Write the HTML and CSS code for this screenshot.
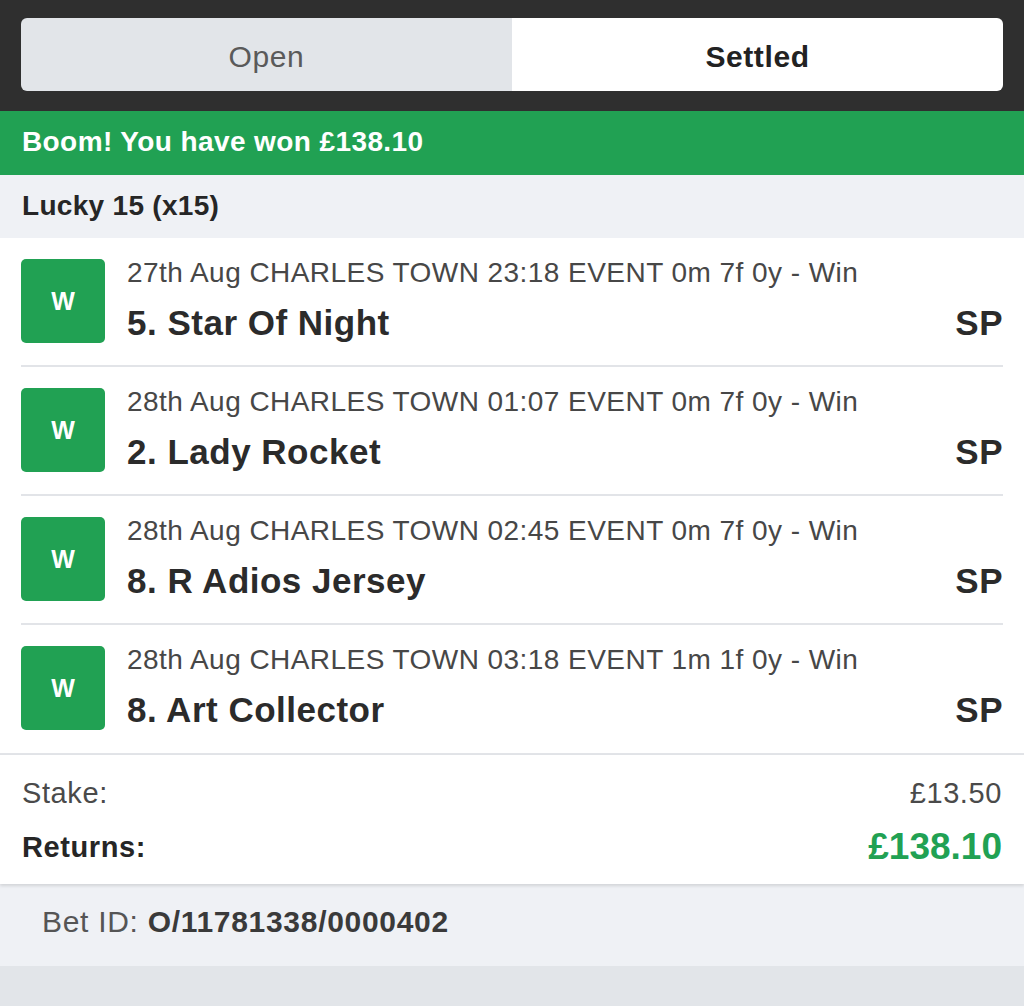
FILE: index.html
```html
<!DOCTYPE html>
<html lang="en">

<head>
    <meta charset="UTF-8">
    <meta name="viewport" content="width=device-width, initial-scale=1.0">
    <title>Settled Bets</title>
    <link rel="stylesheet" href="styles.css">
</head>

<body>

    <!-- Open / Settled switch -->
    <div class="top-bar">
        <div class="tabs">
            <div class="tab">Open</div>
            <div class="tab active">Settled</div>
        </div>
    </div>

    <div class="win-banner">Boom! You have won £138.10</div>

    <div class="bet-type">Lucky 15 (x15)</div>

    <!-- Selections -->
    <div class="selections">
        <div class="selection">
            <div class="badge">W</div>
            <div class="info">
                <div class="event">27th Aug CHARLES TOWN 23:18 EVENT 0m 7f 0y - Win</div>
                <div class="runner-line">
                    <span class="runner">5. Star Of Night</span>
                    <span class="price">SP</span>
                </div>
            </div>
        </div>
        <div class="selection">
            <div class="badge">W</div>
            <div class="info">
                <div class="event">28th Aug CHARLES TOWN 01:07 EVENT 0m 7f 0y - Win</div>
                <div class="runner-line">
                    <span class="runner">2. Lady Rocket</span>
                    <span class="price">SP</span>
                </div>
            </div>
        </div>
        <div class="selection">
            <div class="badge">W</div>
            <div class="info">
                <div class="event">28th Aug CHARLES TOWN 02:45 EVENT 0m 7f 0y - Win</div>
                <div class="runner-line">
                    <span class="runner">8. R Adios Jersey</span>
                    <span class="price">SP</span>
                </div>
            </div>
        </div>
        <div class="selection">
            <div class="badge">W</div>
            <div class="info">
                <div class="event">28th Aug CHARLES TOWN 03:18 EVENT 1m 1f 0y - Win</div>
                <div class="runner-line">
                    <span class="runner">8. Art Collector</span>
                    <span class="price">SP</span>
                </div>
            </div>
        </div>
    </div>

    <!-- Totals -->
    <div class="totals">
        <div class="total-row">
            <span>Stake:</span>
            <span>£13.50</span>
        </div>
        <div class="total-row returns">
            <span>Returns:</span>
            <span class="amount">£138.10</span>
        </div>
    </div>

    <div class="bet-id">Bet ID: <strong>O/11781338/0000402</strong></div>

    <div class="footer-space"></div>

</body>

</html>
```

FILE: styles.css
```css
body {
    font-family: 'Liberation Sans', Arial, Helvetica, sans-serif;
    background-color: #e2e5e9; /* Grey page background */
    margin: 0;
    padding: 0;
    color: #2b2b2b;
}

.top-bar {
    background-color: #2f2f2f; /* Dark header */
    padding: 18px 21px 20px;
}

.tabs {
    display: flex;
    height: 73px;
    border-radius: 6px;
    overflow: hidden;
}

.tab {
    flex: 1;
    display: flex;
    align-items: center;
    justify-content: center;
    padding-top: 5px;
    background-color: #e2e5e9;
    color: #5a5a5a;
    font-size: 30px;
    letter-spacing: 0.6px;
}

.tab.active {
    background-color: #fff;
    color: #222;
    font-weight: bold;
}

.win-banner {
    background-color: #21a153; /* Green win message */
    color: #fff;
    font-weight: bold;
    font-size: 28px;
    letter-spacing: 0.4px;
    height: 64px;
    line-height: 62px;
    padding: 0 22px;
}

.bet-type {
    background-color: #eff1f5;
    font-weight: bold;
    font-size: 28px;
    letter-spacing: 0.3px;
    height: 63px;
    line-height: 62px;
    padding: 0 22px;
    color: #262626;
}

.selections {
    background-color: #fff;
    border-bottom: 2px solid #e2e4e8;
}

.selection {
    display: flex;
    margin: 0 21px;
    padding: 21px 0 22px;
    border-bottom: 2px solid #e2e4e8;
}

.selection:last-child {
    border-bottom: none;
    padding-bottom: 23px;
}

.badge {
    width: 84px;
    height: 84px;
    flex-shrink: 0;
    border-radius: 5px;
    background-color: #21a153;
    color: #fff;
    font-weight: bold;
    font-size: 25px;
    display: flex;
    align-items: center;
    justify-content: center;
}

.info {
    flex: 1;
    margin-left: 22px;
}

.event {
    font-size: 28px;
    letter-spacing: 0.45px;
    color: #474747;
    line-height: 30px;
    margin-top: -1px;
    white-space: nowrap;
}

.runner-line {
    display: flex;
    justify-content: space-between;
    margin-top: 16px;
    font-weight: bold;
    font-size: 35px;
    letter-spacing: 0.5px;
    line-height: 38px;
    color: #2b2b2b;
}

.totals {
    background-color: #fff;
    padding: 11px 22px 10px;
    box-shadow: 0 2px 3px rgba(0, 0, 0, 0.12);
    position: relative;
}

.total-row {
    display: flex;
    justify-content: space-between;
    align-items: center;
    font-size: 29px;
    letter-spacing: 0.6px;
    color: #4a4a4a;
    height: 54px;
}

.total-row.returns {
    font-weight: bold;
    color: #262626;
}

.total-row .amount {
    color: #21a153;
    font-size: 37px;
    letter-spacing: 0;
}

.bet-id {
    background-color: #eff1f5;
    height: 82px;
    line-height: 76px;
    padding: 0 42px;
    font-size: 30px;
    letter-spacing: 0.7px;
    color: #555;
}

.bet-id strong {
    color: #3a3a3a;
}

.footer-space {
    height: 60px;
}
```
